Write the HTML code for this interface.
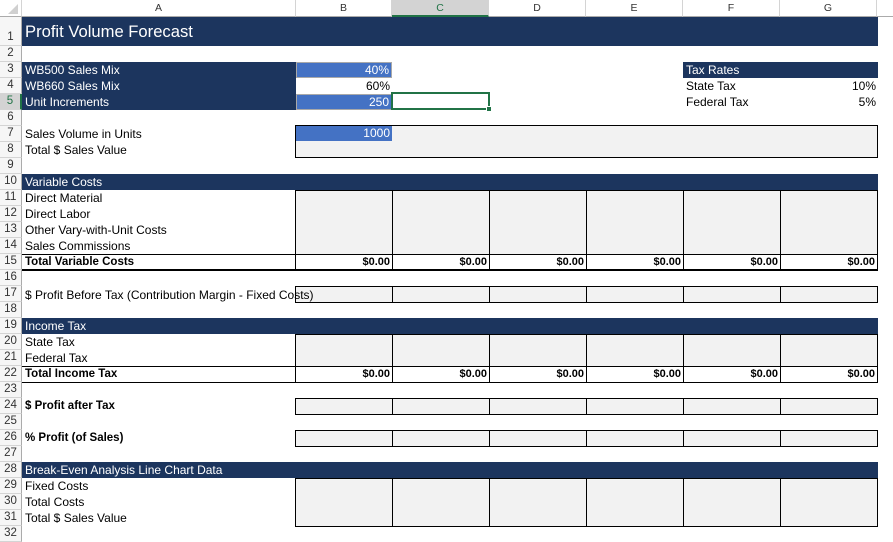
<!DOCTYPE html>
<html><head><meta charset="utf-8"><style>
*{margin:0;padding:0;box-sizing:border-box}
body{width:893px;height:534px;overflow:hidden;background:#fff;font-family:"Liberation Sans",Arial,sans-serif;font-size:12px;color:#000;position:relative}
.a{position:absolute}
.ch{position:absolute;top:0;height:17px;background:#fff;border-right:1px solid #d4d4d4;border-bottom:1px solid #ababab;text-align:center;line-height:16px;color:#333;font-size:10.5px}
.rh{position:absolute;left:0;width:22px;background:#f6f6f6;border-bottom:1px solid #d4d4d4;border-right:1px solid #ababab;text-align:center;line-height:15px;color:#333;font-size:11.5px}
.nv{position:absolute;background:#1c355e;color:#fff;line-height:16px;padding-left:3px}
.t{position:absolute;left:25px;line-height:16px;white-space:nowrap}
.g{position:absolute;background:#f2f2f2;border:1px solid #000}
.v{position:absolute;line-height:15px;text-align:right;padding-right:2px;font-weight:bold;font-size:11px}
.b{position:absolute;background:#000}
</style></head><body>
<div class="ch" style="left:0;width:22px;background:#fff"></div>
<div class="a" style="left:8px;top:4px;width:0;height:0;border-left:10px solid transparent;border-bottom:10px solid #d0d0d0"></div>
<div class="ch" style="left:22px;width:274px">A</div>
<div class="ch" style="left:296px;width:96px">B</div>
<div class="ch" style="left:392px;width:97px;background:#d3d3d3;border-bottom:2px solid #217346;color:#217346">C</div>
<div class="ch" style="left:489px;width:97px">D</div>
<div class="ch" style="left:586px;width:97px">E</div>
<div class="ch" style="left:683px;width:97px">F</div>
<div class="ch" style="left:780px;width:97px">G</div>
<div class="ch" style="left:877px;width:16px;border-right:none"></div>
<div class="rh" style="top:17px;height:29px;line-height:40px">1</div>
<div class="rh" style="top:46px;height:16px">2</div>
<div class="rh" style="top:62px;height:16px">3</div>
<div class="rh" style="top:78px;height:16px">4</div>
<div class="rh" style="top:94px;height:16px;background:#d3d3d3;border-right:2px solid #217346;color:#217346">5</div>
<div class="rh" style="top:110px;height:16px">6</div>
<div class="rh" style="top:126px;height:16px">7</div>
<div class="rh" style="top:142px;height:16px">8</div>
<div class="rh" style="top:158px;height:16px">9</div>
<div class="rh" style="top:174px;height:16px">10</div>
<div class="rh" style="top:190px;height:16px">11</div>
<div class="rh" style="top:206px;height:16px">12</div>
<div class="rh" style="top:222px;height:16px">13</div>
<div class="rh" style="top:238px;height:16px">14</div>
<div class="rh" style="top:254px;height:16px">15</div>
<div class="rh" style="top:270px;height:16px">16</div>
<div class="rh" style="top:286px;height:16px">17</div>
<div class="rh" style="top:302px;height:16px">18</div>
<div class="rh" style="top:318px;height:16px">19</div>
<div class="rh" style="top:334px;height:16px">20</div>
<div class="rh" style="top:350px;height:16px">21</div>
<div class="rh" style="top:366px;height:16px">22</div>
<div class="rh" style="top:382px;height:16px">23</div>
<div class="rh" style="top:398px;height:16px">24</div>
<div class="rh" style="top:414px;height:16px">25</div>
<div class="rh" style="top:430px;height:16px">26</div>
<div class="rh" style="top:446px;height:16px">27</div>
<div class="rh" style="top:462px;height:16px">28</div>
<div class="rh" style="top:478px;height:16px">29</div>
<div class="rh" style="top:494px;height:16px">30</div>
<div class="rh" style="top:510px;height:16px">31</div>
<div class="rh" style="top:526px;height:16px">32</div>

<div class="nv" style="left:22px;top:17px;width:856px;height:29px;font-size:16.6px;line-height:29px">Profit Volume Forecast</div>
<div class="nv" style="left:22px;top:62px;width:274px;height:48px;line-height:16px">WB500 Sales Mix<br>WB660 Sales Mix<br>Unit Increments</div>
<div class="a" style="left:296px;top:62px;width:96px;height:16px;background:#4472c4;border:1px solid #a9a9a9;color:#fff;text-align:right;padding-right:2px;line-height:14px">40%</div>
<div class="a" style="left:296px;top:78px;width:96px;height:16px;text-align:right;padding-right:2px;line-height:16px">60%</div>
<div class="a" style="left:296px;top:94px;width:96px;height:16px;background:#4472c4;border:1px solid #a9a9a9;color:#fff;text-align:right;padding-right:2px;line-height:14px">250</div>
<div class="a" style="left:391px;top:92px;width:99px;height:18px;border:2px solid #217346"></div>
<div class="a" style="left:486px;top:106px;width:6px;height:6px;background:#217346;border:1px solid #fff"></div>

<div class="nv" style="left:683px;top:62px;width:195px;height:16px">Tax Rates</div>
<div class="a" style="left:686px;top:78px;line-height:16px">State Tax</div>
<div class="a" style="left:686px;top:94px;line-height:16px">Federal Tax</div>
<div class="a" style="left:780px;top:78px;width:96px;line-height:16px;text-align:right">10%</div>
<div class="a" style="left:780px;top:94px;width:96px;line-height:16px;text-align:right">5%</div>

<div class="g" style="left:295px;top:125px;width:583px;height:33px"></div>
<div class="a" style="left:296px;top:126px;width:96px;height:15px;background:#4472c4;color:#fff;text-align:right;padding-right:2px;line-height:15px">1000</div>
<div class="t" style="top:126px">Sales Volume in Units</div>
<div class="t" style="top:142px">Total $ Sales Value</div>

<div class="nv" style="left:22px;top:174px;width:856px;height:16px">Variable Costs</div>
<div class="t" style="top:190px">Direct Material</div>
<div class="t" style="top:206px">Direct Labor</div>
<div class="t" style="top:222px">Other Vary-with-Unit Costs</div>
<div class="t" style="top:238px">Sales Commissions</div>
<div class="t" style="top:254px;font-weight:bold;font-size:11.5px">Total Variable Costs</div>
<div class="g" style="left:295px;top:190px;width:98px;height:65px"></div>
<div class="g" style="left:392px;top:190px;width:98px;height:65px"></div>
<div class="g" style="left:489px;top:190px;width:98px;height:65px"></div>
<div class="g" style="left:586px;top:190px;width:98px;height:65px"></div>
<div class="g" style="left:683px;top:190px;width:98px;height:65px"></div>
<div class="g" style="left:780px;top:190px;width:98px;height:65px"></div>
<div class="b" style="left:22px;top:254px;width:856px;height:1px"></div>
<div class="b" style="left:22px;top:269px;width:856px;height:2px"></div>
<div class="b" style="left:295px;top:190px;width:1px;height:80px"></div>
<div class="b" style="left:392px;top:254px;width:1px;height:16px"></div>
<div class="b" style="left:489px;top:254px;width:1px;height:16px"></div>
<div class="b" style="left:586px;top:254px;width:1px;height:16px"></div>
<div class="b" style="left:683px;top:254px;width:1px;height:16px"></div>
<div class="b" style="left:780px;top:254px;width:1px;height:16px"></div>
<div class="b" style="left:877px;top:254px;width:1px;height:16px"></div>
<div class="v" style="left:296px;top:255px;width:96px">$0.00</div>
<div class="v" style="left:393px;top:255px;width:96px">$0.00</div>
<div class="v" style="left:490px;top:255px;width:96px">$0.00</div>
<div class="v" style="left:587px;top:255px;width:96px">$0.00</div>
<div class="v" style="left:684px;top:255px;width:96px">$0.00</div>
<div class="v" style="left:781px;top:255px;width:96px">$0.00</div>

<div class="g" style="left:295px;top:286px;width:98px;height:17px"></div>
<div class="g" style="left:392px;top:286px;width:98px;height:17px"></div>
<div class="g" style="left:489px;top:286px;width:98px;height:17px"></div>
<div class="g" style="left:586px;top:286px;width:98px;height:17px"></div>
<div class="g" style="left:683px;top:286px;width:98px;height:17px"></div>
<div class="g" style="left:780px;top:286px;width:98px;height:17px"></div>
<div class="t" style="top:287px">$ Profit Before Tax (Contribution Margin - Fixed Costs)</div>

<div class="nv" style="left:22px;top:318px;width:856px;height:16px">Income Tax</div>
<div class="t" style="top:334px">State Tax</div>
<div class="t" style="top:350px">Federal Tax</div>
<div class="t" style="top:366px;font-weight:bold;font-size:11.5px">Total Income Tax</div>
<div class="g" style="left:295px;top:334px;width:98px;height:33px"></div>
<div class="g" style="left:392px;top:334px;width:98px;height:33px"></div>
<div class="g" style="left:489px;top:334px;width:98px;height:33px"></div>
<div class="g" style="left:586px;top:334px;width:98px;height:33px"></div>
<div class="g" style="left:683px;top:334px;width:98px;height:33px"></div>
<div class="g" style="left:780px;top:334px;width:98px;height:33px"></div>
<div class="b" style="left:22px;top:366px;width:856px;height:1px"></div>
<div class="b" style="left:22px;top:382px;width:856px;height:1px"></div>
<div class="b" style="left:295px;top:334px;width:1px;height:48px"></div>
<div class="b" style="left:392px;top:366px;width:1px;height:16px"></div>
<div class="b" style="left:489px;top:366px;width:1px;height:16px"></div>
<div class="b" style="left:586px;top:366px;width:1px;height:16px"></div>
<div class="b" style="left:683px;top:366px;width:1px;height:16px"></div>
<div class="b" style="left:780px;top:366px;width:1px;height:16px"></div>
<div class="b" style="left:877px;top:366px;width:1px;height:16px"></div>
<div class="v" style="left:296px;top:367px;width:96px">$0.00</div>
<div class="v" style="left:393px;top:367px;width:96px">$0.00</div>
<div class="v" style="left:490px;top:367px;width:96px">$0.00</div>
<div class="v" style="left:587px;top:367px;width:96px">$0.00</div>
<div class="v" style="left:684px;top:367px;width:96px">$0.00</div>
<div class="v" style="left:781px;top:367px;width:96px">$0.00</div>

<div class="t" style="top:398px;font-weight:bold;font-size:11.5px">$ Profit after Tax</div>
<div class="t" style="top:430px;font-weight:bold;font-size:11.5px">% Profit (of Sales)</div>
<div class="g" style="left:295px;top:398px;width:98px;height:17px"></div>
<div class="g" style="left:392px;top:398px;width:98px;height:17px"></div>
<div class="g" style="left:489px;top:398px;width:98px;height:17px"></div>
<div class="g" style="left:586px;top:398px;width:98px;height:17px"></div>
<div class="g" style="left:683px;top:398px;width:98px;height:17px"></div>
<div class="g" style="left:780px;top:398px;width:98px;height:17px"></div>
<div class="g" style="left:295px;top:430px;width:98px;height:17px"></div>
<div class="g" style="left:392px;top:430px;width:98px;height:17px"></div>
<div class="g" style="left:489px;top:430px;width:98px;height:17px"></div>
<div class="g" style="left:586px;top:430px;width:98px;height:17px"></div>
<div class="g" style="left:683px;top:430px;width:98px;height:17px"></div>
<div class="g" style="left:780px;top:430px;width:98px;height:17px"></div>

<div class="nv" style="left:22px;top:462px;width:856px;height:16px">Break-Even Analysis Line Chart Data</div>
<div class="t" style="top:478px">Fixed Costs</div>
<div class="t" style="top:494px">Total Costs</div>
<div class="t" style="top:510px">Total $ Sales Value</div>
<div class="g" style="left:295px;top:478px;width:98px;height:49px"></div>
<div class="g" style="left:392px;top:478px;width:98px;height:49px"></div>
<div class="g" style="left:489px;top:478px;width:98px;height:49px"></div>
<div class="g" style="left:586px;top:478px;width:98px;height:49px"></div>
<div class="g" style="left:683px;top:478px;width:98px;height:49px"></div>
<div class="g" style="left:780px;top:478px;width:98px;height:49px"></div>
</body></html>
